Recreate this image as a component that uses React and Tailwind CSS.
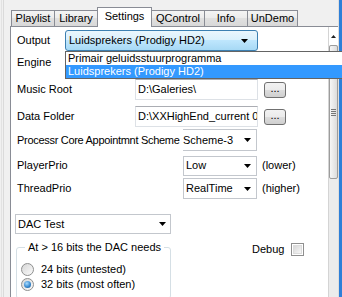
import React from 'react'

const Arrow = () => (
    <svg width="7" height="4" viewBox="0 0 7 4" className="shrink-0">
        <path d="M0 0h7L3.5 4z" fill="#000" />
    </svg>
);

const tabs = [
    { name: "Playlist", w: "w-[44px]" },
    { name: "Library", w: "w-[43px]" },
    { name: "Settings", w: "w-[55px]", active: true },
    { name: "QControl", w: "w-[53px]" },
    { name: "Info", w: "w-[43px]" },
    { name: "UnDemo", w: "w-[50px]" },
];

const Combo = ({ text, className = "" }) => (
    <div className={`flex items-center justify-between bg-white border border-[#c3c7cd] pl-[2px] pr-[5px] ${className}`}>
        <span className="whitespace-nowrap">{text}</span>
        <Arrow />
    </div>
);

const Field = ({ text }) => (
    <div className="w-[123px] h-[21px] flex items-center bg-white border border-[#dde1e6] border-t-[#abadb3] pl-[2px] overflow-hidden whitespace-nowrap">
        {text}
    </div>
);

const DotsButton = () => (
    <button className="ml-[6px] w-[22px] h-[16px] rounded-[3px] border border-[#707070] bg-[linear-gradient(to_bottom,#f2f2f2_0%,#ebebeb_50%,#dddddd_50%,#cfcfcf_100%)] flex items-center justify-center leading-none pb-[2px]">
        ...
    </button>
);

const Radio = ({ checked }) => (
    <div className="w-[13px] h-[13px] rounded-full border border-[#8e8f8f] bg-[linear-gradient(to_bottom_right,#d6d6d6,#fbfbfb)] flex items-center justify-center shrink-0">
        {checked && (
            <div className="w-[7px] h-[7px] rounded-full bg-[radial-gradient(circle_at_40%_35%,#a9dcff_0%,#3a8bd0_55%,#164f86_100%)]" />
        )}
    </div>
);

const App = () => {
    return (
        <div className="relative w-[342px] h-[297px] overflow-hidden bg-[#f0f0f0] flex font-['Liberation_Sans',Arial,sans-serif] text-[11px] leading-[13px] text-black">
            {/* left gutter */}
            <div className="w-[10px] flex">
                <div className="w-[1px]" />
                <div className="w-[1px] bg-[#e2e2e2]" />
                <div className="w-[1px]" />
                <div className="w-[1px] bg-[#dadada]" />
            </div>

            <div className="w-[328px] flex flex-col">
                {/* tab strip */}
                <div className="h-[27px] flex items-end border-b border-[#898c95] pl-[1px] shrink-0">
                    {tabs.map((t, i) =>
                        t.active ? (
                            <div
                                key={t.name}
                                className={`${t.w} h-[20px] -mb-px -ml-px relative z-10 bg-white border border-b-0 border-[#898c95] flex justify-center pt-[2px]`}
                            >
                                {t.name}
                            </div>
                        ) : (
                            <div
                                key={t.name}
                                className={`${t.w} h-[16px] border-t border-r border-[#898c95] ${i === 0 ? "border-l" : ""} bg-[linear-gradient(to_bottom,#f4f4f4_0%,#ebebeb_50%,#e0e0e0_50%,#d8d8d8_100%)] flex justify-center pt-[1px]`}
                            >
                                {t.name}
                            </div>
                        )
                    )}
                </div>

                {/* panel */}
                <div className="flex-1 flex border-l border-[#898c95] bg-white">
                    <div className="flex-1 flex flex-col pl-[6px]">
                        <div className="mt-[3px] h-[21px] flex items-center">
                            <span className="w-[48px]">Output</span>
                            <div className="w-[193px] h-[21px] rounded-[3px] border border-[#3c7fb1] bg-[linear-gradient(to_bottom,#eaf6fd_0%,#d9f0fc_50%,#bee6fd_50%,#a7d9f5_100%)] flex items-center justify-between pl-[3px] pr-[9px]">
                                <span>Luidsprekers (Prodigy HD2)</span>
                                <Arrow />
                            </div>
                        </div>

                        <div className="h-[22px] flex items-center">
                            <span>Engine</span>
                        </div>

                        <div className="mt-[6px] h-[21px] flex items-center">
                            <span className="w-[118px]">Music Root</span>
                            <Field text="D:\Galeries\" />
                            <DotsButton />
                        </div>

                        <div className="mt-[6px] h-[21px] flex items-center">
                            <span className="w-[118px]">Data Folder</span>
                            <Field text="D:\XXHighEnd_current 0" />
                            <DotsButton />
                        </div>

                        <div className="mt-[2px] h-[22px] flex items-center">
                            <span className="w-[166px] whitespace-nowrap tracking-[-0.3px]">Processr Core Appointmnt Scheme</span>
                            <Combo text="Scheme-3" className="w-[74px] h-[22px] border-l-0 !pl-0" />
                        </div>

                        <div className="mt-[4px] h-[21px] flex items-center">
                            <span className="w-[166px]">PlayerPrio</span>
                            <Combo text="Low" className="w-[74px] h-[20px]" />
                            <span className="ml-[5px]">(lower)</span>
                        </div>

                        <div className="mt-[2px] h-[21px] flex items-center">
                            <span className="w-[166px]">ThreadPrio</span>
                            <Combo text="RealTime" className="w-[74px] h-[21px]" />
                            <span className="ml-[5px]">(higher)</span>
                        </div>

                        <Combo text="DAC Test" className="mt-[15px] -ml-[2px] w-[156px] h-[20px] !pr-[4px]" />

                        <div className="mt-[7px] flex items-start">
                            <fieldset className="-ml-px w-[155px] border border-[#d5dfe5] rounded-[3px] pl-[4px] pb-[6px]">
                                <legend className="ml-[4px] px-[3px] leading-[13px]">At &gt; 16 bits the DAC needs</legend>
                                <div className="pt-[8px] h-[23px] flex items-center gap-[7px]">
                                    <Radio />
                                    <span>24 bits (untested)</span>
                                </div>
                                <div className="h-[15px] flex items-center gap-[7px]">
                                    <Radio checked />
                                    <span>32 bits (most often)</span>
                                </div>
                            </fieldset>
                            <div className="ml-[81px] mt-[1px] h-[14px] flex items-center">
                                <span>Debug</span>
                                <div className="ml-[7px] w-[13px] h-[13px] border border-[#8f8f8f] bg-white p-[1px]">
                                    <div className="w-full h-full bg-[linear-gradient(to_bottom_right,#d8d8d8,#f7f7f7)] border border-[#dcdcdc]" />
                                </div>
                            </div>
                        </div>
                    </div>

                    {/* scrollbar */}
                    <div className="w-[10px] flex flex-col bg-[#ececec] border-l border-[#d4d4d4]">
                        <div className="h-[18px] flex items-center justify-center bg-white">
                            <svg width="5" height="3" viewBox="0 0 5 3">
                                <path d="M0 3h5L2.5 0z" fill="#222" />
                            </svg>
                        </div>
                        <div className="h-[134px] border border-[#9c9c9c] rounded-[2px] bg-[linear-gradient(to_right,#f6f6f6,#dcdcdc)] flex flex-col items-center justify-center gap-[1px]">
                            <div className="w-[5px] h-px bg-[#777]" />
                            <div className="w-[5px] h-px bg-[#777]" />
                            <div className="w-[5px] h-px bg-[#777]" />
                            <div className="w-[5px] h-px bg-[#777]" />
                        </div>
                    </div>
                </div>
            </div>

            {/* right window edge */}
            <div className="w-[1px] bg-[#dedede]" />
            <div className="w-[3px] bg-[#2e7fd8]" />

            {/* opened dropdown list */}
            <div className="absolute left-[65px] top-[51px] w-[290px] border border-[#646464] bg-white">
                <div className="h-[13px] pl-[2px] flex items-center">Primair geluidsstuurprogramma</div>
                <div className="h-[13px] pl-[2px] flex items-center bg-[#3399ff] text-white">Luidsprekers (Prodigy HD2)</div>
            </div>
        </div>
    );
}

export default App;
